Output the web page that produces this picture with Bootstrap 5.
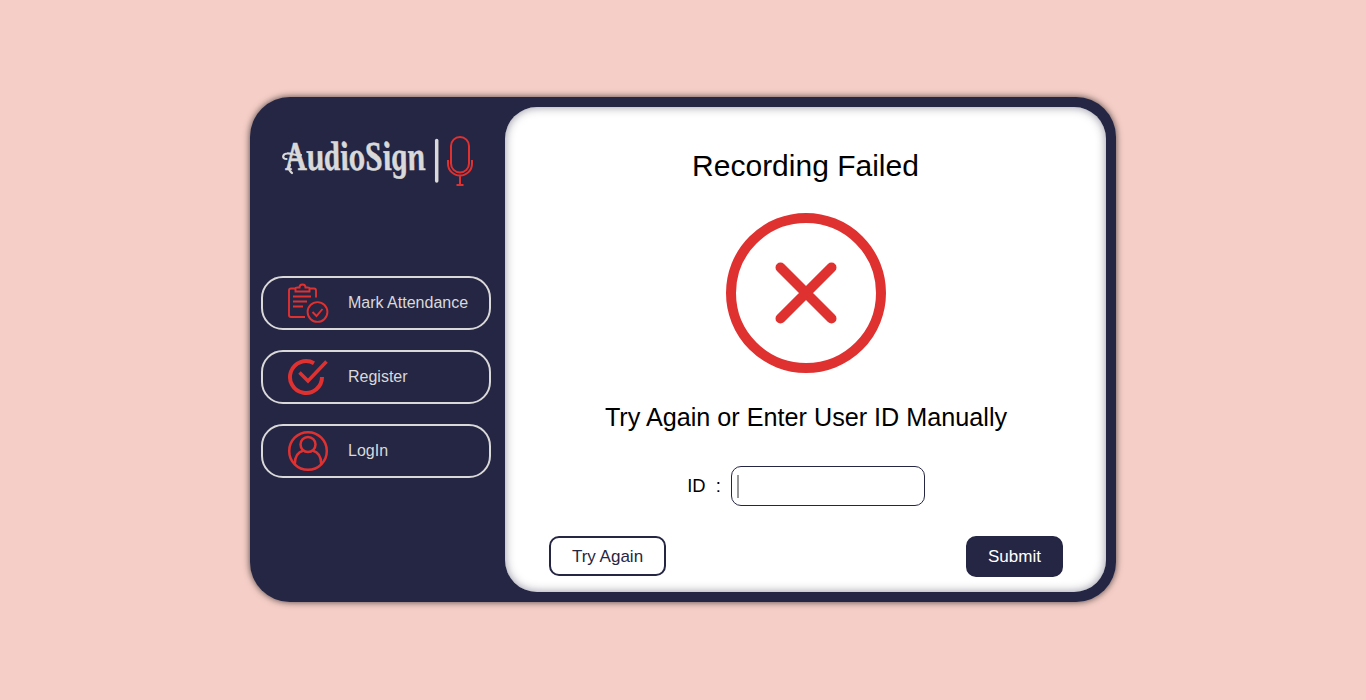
<!DOCTYPE html>
<html lang="en">
<head>
<meta charset="utf-8">
<meta name="viewport" content="width=device-width, initial-scale=1">
<title>AudioSign</title>
<link href="https://cdn.jsdelivr.net/npm/bootstrap@5.3.0/dist/css/bootstrap.min.css" rel="stylesheet">
<style>
:root { --navy: #252644; --red: #e03131; --pale: #d9d9d9; }
body { background: #f5cec7; color: #000; font-family: "Liberation Sans", Arial, sans-serif; height: 700px; line-height: 1.15; overflow: hidden; }
.shell { width: 866px; height: 505px; margin-top: 97px; padding: 10px 10px 10px 11px; border-radius: 40px; background: var(--navy); box-shadow: 0 0 7px #000000b0; }
.side { width: 230px; margin-right: 14px; }
.brand { margin: 20px 0 0 17px; width: 200px; height: 66px; }
.menu { margin-top: 83px; gap: 20px; }
.menu a { height: 54px; padding-left: 24px; gap: 19px; border: 2px solid var(--pale); border-radius: 22px; color: var(--pale); font-size: 16px; }
.menu svg { width: 42px; height: 42px; fill: none; stroke: var(--red); }
.pane { width: 601px; height: 485px; border-radius: 32px; background: #fff; box-shadow: inset 0 0 10px #25264480; padding: 0 43px 0 44px; }
.pane h1 { font-size: 30px; margin: 41px 1px 0 0; font-weight: 400; line-height: 36px; }
.pane h2 { font-size: 25.2px; margin: 29px 0 0; font-weight: 400; line-height: 30px; }
.cross { margin: 29px 1px 0 0; }
.id-row { margin-top: 34px; font-size: 18.4px; height: 40px; }
.id-row input { width: 194px; height: 40px; margin-left: 10px; padding: 0 6px; border: 1px solid var(--navy); border-radius: 10px; background: #fff; color: #888; outline: 0; }
.caret { left: 16px; top: 9px; width: 2px; height: 23px; background: #999; }
.actions { margin-top: 30px; }
.actions button { height: 40px; border-radius: 10px; font-size: 17px; border: 2px solid var(--navy); padding: 0; line-height: 1; }
.again { width: 117px; background: #fff; color: var(--navy); }
.actions .send { width: 97px; height: 41px; background: var(--navy); color: #fff; }
</style>
</head>
<body>
<main class="shell d-flex mx-auto">
  <aside class="side d-flex flex-column">
    <svg class="brand" viewBox="0 0 200 66" role="img" aria-label="AudioSign">
      <g transform="translate(8 43) skewX(9)"><text x="1" y="0" textLength="140" lengthAdjust="spacingAndGlyphs" font-family="Liberation Serif, serif" font-style="italic" font-weight="700" font-size="41" fill="#d9d9d9" stroke="#d9d9d9" stroke-width=".5">AudioSign</text></g>
      <path d="M8.500 32C4 32 4 27 9 26.500C13 26 18 29 23 28M12 38C10 43 12 44 14 46" fill="none" stroke="#d9d9d9" stroke-width="2.200" stroke-linecap="round"/>
      <path d="M158.700 13.500V54" stroke="#d9d9d9" stroke-width="3.500" stroke-linecap="round"/>
      <g fill="none" stroke="#e03131" stroke-width="2"><rect x="173" y="10" width="18" height="35.500" rx="9"/><path d="M170 33v4a12 11.500 0 0 0 24 0v-4M182 49v9M178.500 58h7"/></g>
    </svg>
    <nav class="menu d-flex flex-column">
      <a href="#" class="d-flex align-items-center text-decoration-none">
        <svg viewBox="0 0 42 42" stroke-width="1.900"><path d="M8 6.500H4q-2 0-2 2V33q0 2 2 2h14M22 6.500h5q2 0 2 2v7M8.500 9.500v-3q0-1 2-1h2a3 3 0 0 1 6 0h2q2 0 2 1v3zM6 14.500h18M6 19.500h14M6 24.500h10"/><circle cx="30.500" cy="30" r="9.900"/><path d="M25.500 30l4 4 6-7"/></svg>
        <span>Mark Attendance</span>
      </a>
      <a href="#" class="d-flex align-items-center text-decoration-none">
        <svg viewBox="0 0 42 42" stroke-width="4"><path d="M27 7.200A16 16 0 1 0 35 21"/><path d="M12.500 16.500l8.500 8.500L39.500 5.500" stroke-width="3.500"/></svg>
        <span>Register</span>
      </a>
      <a href="#" class="d-flex align-items-center text-decoration-none">
        <svg viewBox="0 0 42 42" stroke-width="2.500"><circle cx="21" cy="21" r="18.800"/><circle cx="21" cy="14.500" r="7.500"/><path d="M7.800 34C7.800 27 11 22 16.500 20.500M25.500 20.500C31 22 34.200 27 34.200 34"/></svg>
        <span>LogIn</span>
      </a>
    </nav>
  </aside>
  <section class="pane d-flex flex-column">
    <h1 class="text-center">Recording Failed</h1>
    <svg class="cross align-self-center" width="160" height="160" viewBox="0 0 160 160" fill="none" stroke="#e03131" stroke-width="10"><circle cx="80" cy="80" r="75"/><path d="M54.500 54.500l51 51M105.500 54.500l-51 51" stroke-linecap="round"/></svg>
    <h2 class="text-center">Try Again or Enter User ID Manually</h2>
    <div class="id-row d-flex align-items-center justify-content-center">
      <label for="uid">ID&nbsp; :</label>
      <div class="position-relative"><input id="uid" type="text"><span class="caret position-absolute"></span></div>
    </div>
    <div class="actions d-flex justify-content-between">
      <button type="button" class="again">Try Again</button>
      <button type="button" class="send">Submit</button>
    </div>
  </section>
</main>
<script src="https://cdn.jsdelivr.net/npm/bootstrap@5.3.0/dist/js/bootstrap.bundle.min.js"></script>
</body>
</html>
